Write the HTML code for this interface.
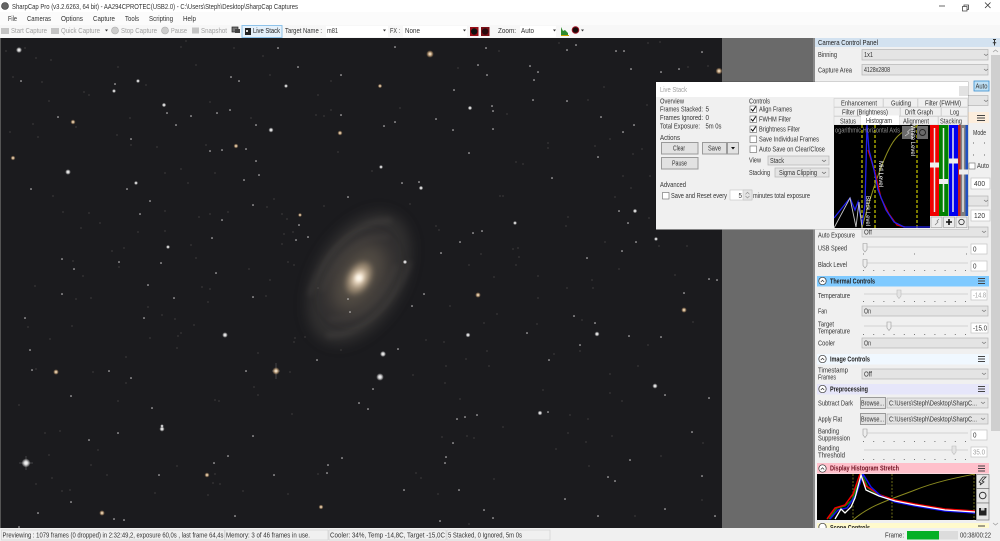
<!DOCTYPE html>
<html><head><meta charset="utf-8"><title>SharpCap</title>
<style>
html,body{margin:0;padding:0;background:#f0f0f0;width:1000px;height:541px;overflow:hidden}
svg{display:block}
text{font-family:"Liberation Sans",sans-serif;font-size:7.3px;fill:#333}
.g{fill:#a0a0a0}.b{font-weight:bold;fill:#222}.t{filter:blur(.2px)}
.c{fill:#e4e4e4;stroke:#b4b4b4;stroke-width:.7}
.w{fill:#fff;stroke:#c4c4c4;stroke-width:.7}
.btn{fill:#e2e2e2;stroke:#9a9a9a;stroke-width:1}
.cb{fill:#fff;stroke:#666;stroke-width:.6}
.tab{fill:#f0f0f0;stroke:#c8c8c8;stroke-width:.5}
.tick{stroke:#777;stroke-width:1;stroke-dasharray:1 9.2;fill:none}
.track{stroke:#dcdcdc;stroke-width:1.5}
.ham{stroke:#444;stroke-width:.9}
</style></head><body>
<svg xmlns="http://www.w3.org/2000/svg" width="1000" height="541" viewBox="0 0 1000 541">
<defs>
<filter id="b1" x="-50%" y="-50%" width="200%" height="200%"><feGaussianBlur stdDeviation="1.5"/></filter>
<filter id="b2" x="-50%" y="-50%" width="200%" height="200%"><feGaussianBlur stdDeviation="3"/></filter>
<filter id="b3" x="-50%" y="-50%" width="200%" height="200%"><feGaussianBlur stdDeviation="6"/></filter>
<filter id="b4" x="-50%" y="-50%" width="200%" height="200%"><feGaussianBlur stdDeviation="9"/></filter>
<radialGradient id="glow"><stop offset="0" stop-color="#fff"/><stop offset=".4" stop-color="#fff" stop-opacity=".8"/><stop offset="1" stop-color="#fff" stop-opacity="0"/></radialGradient>
<radialGradient id="glowo"><stop offset="0" stop-color="#fff6e6"/><stop offset=".4" stop-color="#ffd9a8" stop-opacity=".75"/><stop offset="1" stop-color="#e8b070" stop-opacity="0"/></radialGradient>
<clipPath id="img"><rect x="0" y="38" width="722" height="490"/></clipPath>
<clipPath id="hc"><rect x="834" y="125" width="96" height="103"/></clipPath>
<clipPath id="dc"><rect x="817" y="474" width="159" height="46"/></clipPath>
</defs>

<!-- chrome -->
<rect width="1000" height="541" fill="#f0f0f0"/>
<rect width="1000" height="12" fill="#fff"/>
<rect y="12" width="1000" height="13" fill="#fbfbfb"/>
<rect y="25" width="1000" height="13" fill="#f7f7f7"/>

<!-- image -->
<rect x="722" y="38" width="91" height="490" fill="#6a6a6a"/>
<rect x="813" y="38" width="2" height="490" fill="#8a8a8a"/>
<rect x="0" y="38" width="722" height="490" fill="#1b1b1e"/>
<rect x="0" y="38" width="1" height="490" fill="#555"/>
<g clip-path="url(#img)">
<g transform="translate(359 278) rotate(30)">
<ellipse rx="44" ry="72" fill="#454240" opacity=".5" filter="url(#b3)"/>
<path d="M-34 40C-44 0 -34 -50 0 -66M36 -40C44 0 34 50 0 66" fill="none" stroke="#6a6561" stroke-width="5" opacity=".22" filter="url(#b2)"/>
<path d="M-26 30C-32 -5 -22 -40 6 -50M26 -30C32 5 22 40 -6 50" fill="none" stroke="#6f6963" stroke-width="4" opacity=".18" filter="url(#b2)"/>
<ellipse rx="23" ry="38" fill="#5f564b" opacity=".75" filter="url(#b4)"/>
<ellipse rx="11" ry="17" fill="#97866f" filter="url(#b2)"/>
<ellipse rx="6" ry="9" fill="#eedcc4" filter="url(#b2)"/>
<circle r="3.500" fill="#fffaf0" filter="url(#b1)"/>
</g>
<!-- faint stars -->
<path fill="none" stroke="#6f6a68" stroke-width="1.1" stroke-linecap="round" d="M6 51h.01M25 48h.01M36 58h.01M51 60h.01M42 82h.01M89 95h.01M84 92h.01M49 101h.01M130 118h.01M146 85h.01M118 67h.01M196 65h.01M186 41h.01M181 47h.01M234 48h.01M263 56h.01M270 75h.01M331 81h.01M318 95h.01M331 110h.01M324 116h.01M316 115h.01M338 152h.01M63 212h.01M81 228h.01M100 223h.01M89 213h.01M138 232h.01M165 211h.01M165 231h.01M210 214h.01M228 212h.01M199 217h.01M191 245h.01M196 258h.01M282 244h.01M284 234h.01M293 232h.01M282 214h.01M287 219h.01M267 207h.01M274 199h.01M324 206h.01M288 262h.01M294 265h.01M249 269h.01M270 280h.01M112 251h.01M124 248h.01M73 261h.01M119 267h.01M83 276h.01M165 173h.01M181 169h.01M188 183h.01M215 173h.01M53 196h.01M10 132h.01M38 137h.01M117 135h.01M157 147h.01M131 145h.01M206 145h.01M210 102h.01M251 118h.01M13 77h.01M33 124h.01M76 127h.01M548 148h.01M548 143h.01M595 146h.01M610 139h.01M633 154h.01M642 149h.01M647 105h.01M604 87h.01M588 100h.01M507 114h.01M516 162h.01M523 164h.01M500 196h.01M503 196h.01M568 217h.01M566 226h.01M518 248h.01M519 257h.01M513 249h.01M516 265h.01M481 254h.01M494 277h.01M469 265h.01M439 230h.01M436 226h.01M605 242h.01M619 269h.01M675 275h.01M687 246h.01M659 246h.01M649 218h.01M615 197h.01M623 176h.01M631 188h.01M650 176h.01M372 171h.01M410 204h.01M400 108h.01M458 68h.01M499 51h.01M559 43h.01M648 43h.01M660 42h.01M688 67h.01M708 66h.01M538 276h.01M592 280h.01M35 286h.01M76 299h.01M91 298h.01M148 307h.01M162 315h.01M175 319h.01M194 325h.01M178 336h.01M181 333h.01M177 348h.01M150 338h.01M126 357h.01M50 339h.01M28 327h.01M72 326h.01M93 372h.01M118 401h.01M126 383h.01M36 369h.01M19 405h.01M45 433h.01M60 431h.01M49 455h.01M91 465h.01M107 475h.01M52 478h.01M36 484h.01M62 491h.01M70 490h.01M98 450h.01M177 466h.01M213 483h.01M220 484h.01M215 474h.01M243 491h.01M208 495h.01M155 493h.01M215 400h.01M219 401h.01M254 387h.01M258 395h.01M292 414h.01M258 353h.01M290 372h.01M295 338h.01M305 337h.01M294 342h.01M341 350h.01M318 474h.01M288 494h.01M208 302h.01M202 287h.01M210 289h.01M266 296h.01M318 288h.01M450 306h.01M497 314h.01M484 323h.01M537 324h.01M426 340h.01M444 342h.01M487 351h.01M466 359h.01M489 366h.01M446 366h.01M413 375h.01M445 383h.01M460 399h.01M543 390h.01M570 415h.01M588 419h.01M622 401h.01M610 393h.01M610 374h.01M638 366h.01M648 345h.01M554 354h.01M580 351h.01M582 320h.01M593 288h.01M567 288h.01M538 298h.01M693 322h.01M661 456h.01M612 436h.01M586 442h.01M568 433h.01M556 449h.01M589 466h.01M467 436h.01M474 438h.01M442 437h.01M503 427h.01M416 473h.01M421 478h.01M438 494h.01M494 479h.01M469 524h.01M702 500h.01M635 516h.01M703 443h.01"/>
<!-- medium stars -->
<path fill="none" stroke="#dcdada" stroke-width="1.500" stroke-linecap="round" d="M278 48h.01M298 67h.01M341 75h.01M21 81h.01M131 139h.01M222 150h.01M210 151h.01M259 175h.01M348 197h.01M253 205h.01M222 220h.01M296 240h.01M299 225h.01M62 259h.01M74 269h.01M119 262h.01M161 263h.01M216 273h.01M58 117h.01M31 189h.01M176 125h.01M341 115h.01M256 125h.01M230 110h.01M217 113h.01M167 113h.01M191 116h.01M231 77h.01M239 81h.01M115 84h.01M212 238h.01M308 237h.01M127 189h.01M150 201h.01M140 214h.01M244 180h.01M256 161h.01M246 149h.01M395 47h.01M486 48h.01M530 66h.01M538 72h.01M567 50h.01M576 45h.01M616 51h.01M624 51h.01M631 69h.01M661 72h.01M679 69h.01M702 52h.01M534 80h.01M436 119h.01M453 130h.01M493 129h.01M395 122h.01M384 126h.01M601 117h.01M567 101h.01M634 125h.01M623 132h.01M598 157h.01M469 153h.01M552 178h.01M619 211h.01M628 223h.01M636 242h.01M441 253h.01M460 242h.01M482 231h.01M473 233h.01M622 251h.01M587 258h.01M709 279h.01M717 280h.01M419 182h.01M402 183h.01M478 65h.01M487 75h.01M454 90h.01M492 106h.01M493 111h.01M533 100h.01M174 298h.01M144 318h.01M62 294h.01M25 318h.01M131 378h.01M71 396h.01M32 370h.01M109 371h.01M89 440h.01M118 433h.01M159 475h.01M214 463h.01M228 456h.01M253 436h.01M328 465h.01M342 458h.01M327 473h.01M348 299h.01M350 312h.01M317 360h.01M253 297h.01M359 403h.01M114 519h.01M124 520h.01M71 502h.01M38 513h.01M19 527h.01M235 516h.01M274 475h.01M246 371h.01M30 350h.01M148 285h.01M152 408h.01M424 294h.01M412 306h.01M398 349h.01M684 293h.01M595 323h.01M629 336h.01M661 337h.01M580 345h.01M549 360h.01M548 412h.01M709 398h.01M665 395h.01M457 419h.01M465 417h.01M477 415h.01M453 443h.01M692 432h.01M608 477h.01M615 481h.01M702 476h.01M565 499h.01M665 509h.01M715 516h.01M598 516h.01M484 510h.01M440 521h.01M493 518h.01M459 490h.01M404 490h.01M527 333h.01M574 316h.01M368 409h.01M373 389h.01M445 463h.01M446 457h.01M630 460h.01"/>
<!-- bright stars -->
<g fill="url(#glow)">
<circle cx="19" cy="50" r="3"/><circle cx="68" cy="172" r="2.800"/><circle cx="271" cy="130" r="2.500"/><circle cx="164" cy="105" r="2.200"/><circle cx="114" cy="91" r="2"/><circle cx="138" cy="81" r="2"/><circle cx="168" cy="247" r="2"/><circle cx="136" cy="183" r="2"/><circle cx="286" cy="86" r="2"/><circle cx="470" cy="108" r="2.200"/><circle cx="421" cy="188" r="2.200"/><circle cx="635" cy="211" r="2.200"/><circle cx="515" cy="223" r="2"/><circle cx="405" cy="262" r="2.200"/><circle cx="381" cy="167" r="2"/><circle cx="656" cy="239" r="2"/>
<circle cx="26" cy="463" r="4.500"/><circle cx="162" cy="429" r="2.600"/><circle cx="162" cy="426" r="1.800"/><circle cx="225" cy="335" r="2.800"/><circle cx="380" cy="377" r="3.800"/><circle cx="383" cy="354" r="3"/><circle cx="597" cy="334" r="2.500"/><circle cx="655" cy="386" r="2.600"/><circle cx="540" cy="413" r="2.400"/><circle cx="468" cy="335" r="2.400"/>
</g>
<g fill="url(#glowo)">
<circle cx="73" cy="122" r="2.500"/><circle cx="13" cy="158" r="2.400"/><circle cx="340" cy="133" r="2.500"/><circle cx="236" cy="146" r="2.400"/><circle cx="300" cy="215" r="2"/><circle cx="430" cy="54" r="3.800"/><circle cx="719" cy="71" r="3.400"/><circle cx="380" cy="86" r="2.200"/>
<circle cx="276" cy="371" r="3.800"/><circle cx="56" cy="372" r="2.800"/><circle cx="102" cy="513" r="2.800"/><circle cx="207" cy="475" r="2.500"/><circle cx="321" cy="507" r="2.400"/><circle cx="478" cy="295" r="2.800"/><circle cx="684" cy="310" r="2.800"/>
</g>
<path d="M19 463h14M26 456v14M272 371h8M276 363v16" stroke="#fff" stroke-width=".5" opacity=".35"/>
</g>

<!-- title & toolbar -->
<circle cx="5" cy="6" r="3.500" fill="#666" stroke="#333" stroke-width=".6"/>
<g class="t">
<text x="12" y="8.800" textLength="286" lengthAdjust="spacingAndGlyphs">SharpCap Pro (v3.2.6263, 64 bit) - AA294CPROTEC(USB2.0) - C:\Users\Steph\Desktop\SharpCap Captures</text>
<text x="8" y="21" textLength="9" lengthAdjust="spacingAndGlyphs">File</text>
<text x="27" y="21" textLength="24" lengthAdjust="spacingAndGlyphs">Cameras</text>
<text x="61" y="21" textLength="22" lengthAdjust="spacingAndGlyphs">Options</text>
<text x="93" y="21" textLength="22" lengthAdjust="spacingAndGlyphs">Capture</text>
<text x="125" y="21" textLength="14" lengthAdjust="spacingAndGlyphs">Tools</text>
<text x="149" y="21" textLength="24" lengthAdjust="spacingAndGlyphs">Scripting</text>
<text x="183" y="21" textLength="13" lengthAdjust="spacingAndGlyphs">Help</text>
</g>
<path d="M939 6h6" stroke="#444" stroke-width=".8"/>
<path d="M962.500 6.500h4.500v4.500h-4.500zM964 6.500v-1.500h4.500v4.500h-1.500" fill="none" stroke="#444" stroke-width=".8"/>
<path d="M985 2.500l5.500 5.500M990.500 2.500l-5.500 5.500" stroke="#333" stroke-width=".8"/>

<rect x="1" y="28" width="8" height="6" fill="#c4c4c4"/>
<rect x="51" y="28" width="8" height="6" fill="#c4c4c4"/>
<circle cx="115" cy="30.500" r="3.500" fill="#ccc" stroke="#aaa" stroke-width=".6"/>
<circle cx="165" cy="30.500" r="3.500" fill="#ccc" stroke="#aaa" stroke-width=".6"/>
<rect x="192" y="27.500" width="7" height="6" fill="#c4c4c4"/>
<rect x="232" y="27" width="6" height="5" fill="#777" stroke="#222" stroke-width=".7"/><rect x="235" y="29" width="5" height="4" fill="#444"/>
<rect x="242" y="25.500" width="40" height="12" fill="#e5f1fb" stroke="#8fc3ea" stroke-width="1"/>
<rect x="245" y="28" width="6" height="7" fill="#222"/><rect x="246" y="30" width="2" height="2" fill="#ddd"/>
<rect x="326" y="26" width="62" height="11" fill="#fff"/><rect x="403" y="26" width="64" height="11" fill="#fff"/><rect x="520" y="26" width="36" height="11" fill="#fff"/>
<path d="M105 29.500h3l-1.500 2zM383 29.500h3l-1.500 2zM463 29.500h3l-1.500 2zM553 29.500h3l-1.500 2zM581 29.500h3l-1.500 2z" fill="#333"/>
<rect x="470" y="27" width="8.500" height="9" fill="#9a0f18"/><circle cx="474.200" cy="31.500" r="3.200" fill="#111"/>
<rect x="481" y="27" width="8.500" height="9" fill="#7a1018"/><circle cx="485.200" cy="31.500" r="3.200" fill="#2a0a0e"/>
<path d="M561 35v-8l2 4 2-1 3 3v2z" fill="#2e8b2e"/><path d="M561 35.500h8" stroke="#c9a000" stroke-width="1"/>
<circle cx="575.500" cy="30" r="3.300" fill="#1a0a0a" stroke="#a01525" stroke-width="1"/>
<g class="t">
<text class="g" x="11" y="33" textLength="36" lengthAdjust="spacingAndGlyphs">Start Capture</text>
<text class="g" x="61" y="33" textLength="39" lengthAdjust="spacingAndGlyphs">Quick Capture</text>
<text class="g" x="121" y="33" textLength="36" lengthAdjust="spacingAndGlyphs">Stop Capture</text>
<text class="g" x="171" y="33" textLength="16" lengthAdjust="spacingAndGlyphs">Pause</text>
<text class="g" x="201" y="33" textLength="26" lengthAdjust="spacingAndGlyphs">Snapshot</text>
<text x="253" y="33" textLength="27" lengthAdjust="spacingAndGlyphs" style="fill:#222">Live Stack</text>
<text x="285" y="33" textLength="37" lengthAdjust="spacingAndGlyphs">Target Name :</text>
<text x="327" y="33" textLength="11" lengthAdjust="spacingAndGlyphs">m81</text>
<text x="390" y="33" textLength="10" lengthAdjust="spacingAndGlyphs">FX :</text>
<text x="405" y="33" textLength="15" lengthAdjust="spacingAndGlyphs">None</text>
<text x="498" y="33" textLength="18" lengthAdjust="spacingAndGlyphs">Zoom:</text>
<text x="521" y="33" textLength="13" lengthAdjust="spacingAndGlyphs">Auto</text>
</g>

<!-- right panel -->
<rect x="815" y="38" width="185" height="490" fill="#f0f0f0"/>
<rect x="815" y="38" width="185" height="9" fill="#d3e2f0"/>
<rect x="991" y="47" width="9" height="384" fill="#cfcfcf"/>
<rect x="991" y="47" width="9" height="8" fill="#f0f0f0"/>
<path d="M993 52l2.500-2 2.500 2M993 523l2.500 2 2.500-2" fill="none" stroke="#a0a0a0" stroke-width=".8"/>
<path d="M993 39.500h3M994.500 39.500v6M992.800 42.800h3.400" stroke="#333" stroke-width="1"/>
<rect class="c" x="862" y="49.500" width="126" height="10.500"/>
<rect class="c" x="862" y="64.500" width="126" height="10.500"/>
<rect x="974" y="81" width="15" height="10" fill="#bfe0f5" stroke="#3a8fd0" stroke-width=".8"/>
<rect class="c" x="862" y="95.500" width="126" height="10"/>
<rect x="817" y="112" width="172" height="11" fill="#fdeedd"/>
<path class="ham" d="M977 115.500h8M977 118h8M977 120.500h8"/>
<rect x="969" y="163" width="6" height="6" class="cb"/>
<path d="M973 143h1M984 143h1" stroke="#666" stroke-width="1"/>
<path d="M973 155h1M984 155h1" stroke="#666" stroke-width="1"/>
<rect class="w" x="971" y="178" width="19" height="11"/>
<rect class="c" x="862" y="196" width="126" height="10"/>
<rect class="w" x="971" y="210" width="19" height="11"/>
<path d="M984 100l2 1.500 2-1.500M984 54l2 1.500 2-1.500M984 69l2 1.500 2-1.500M984 200l2 1.500 2-1.500" fill="none" stroke="#777" stroke-width=".7"/>

<rect class="c" x="862" y="227" width="126" height="10"/>
<path class="track" d="M864 247h104M864 263h104M864 294h104M864 326h104M864 433h104M864 450h104"/>
<path d="M863 243.500h4v6l-2 2.500-2-2.500z" fill="#eee" stroke="#999" stroke-width=".6"/>
<path d="M863 259.500h4v6l-2 2.500-2-2.500z" fill="#eee" stroke="#999" stroke-width=".6"/>
<path d="M897 290h4v6l-2 2.500-2-2.500z" fill="#e4e4e4" stroke="#bbb" stroke-width=".6"/>
<path d="M887 322h4v6l-2 2.500-2-2.500z" fill="#eee" stroke="#999" stroke-width=".6"/>
<path d="M863 429h4v6l-2 2.500-2-2.500z" fill="#eee" stroke="#999" stroke-width=".6"/>
<path d="M952 446h4v6l-2 2.500-2-2.500z" fill="#e4e4e4" stroke="#bbb" stroke-width=".6"/>
<path d="M863 254h1M914 254h1M966 254h1" stroke="#777" stroke-width="1"/>
<path class="tick" d="M863 270.500h105" stroke-dasharray="1 3"/>
<path class="tick" d="M863 301.500h105M863 334.500h105M863 441.500h105M863 459.500h105"/>
<rect class="w" x="971" y="244" width="16" height="10"/>
<rect class="w" x="971" y="261" width="16" height="10"/>
<rect class="w" x="971" y="290" width="16" height="10"/>
<rect class="w" x="971" y="323" width="17" height="10"/>
<rect class="c" x="862" y="306" width="126" height="10"/>
<rect class="c" x="862" y="338" width="126" height="10"/>
<rect class="c" x="862" y="369" width="126" height="10"/>
<rect class="btn" x="860.500" y="397.500" width="25" height="11"/>
<rect class="btn" x="860.500" y="413.500" width="25" height="11"/>
<rect class="c" x="887" y="398" width="101" height="10"/>
<rect class="c" x="887" y="414" width="101" height="10"/>
<rect class="w" x="971" y="430" width="16" height="10"/>
<rect class="w" x="971" y="447" width="16" height="10"/>
<path d="M982 231l2 1.500 2-1.500M982 310l2 1.500 2-1.500M982 342l2 1.500 2-1.500M982 373l2 1.500 2-1.500M981 402l2 1.500 2-1.500M981 418l2 1.500 2-1.500" fill="none" stroke="#777" stroke-width=".7"/>

<!-- section headers -->
<rect x="817" y="276" width="172" height="10.500" fill="#7fcaff"/>
<rect x="817" y="354" width="172" height="10.500" fill="#f0f8ff"/>
<rect x="817" y="384" width="172" height="10.500" fill="#e6e6fa"/>
<rect x="817" y="463" width="172" height="10.500" fill="#ffc0cb"/>
<rect x="817" y="523" width="172" height="6" fill="#fffacd"/>
<g fill="#fff" stroke="#333" stroke-width=".7"><circle cx="822.500" cy="281" r="3.700"/><circle cx="822.500" cy="359" r="3.700"/><circle cx="822.500" cy="389" r="3.700"/><circle cx="822.500" cy="468.500" r="3.700"/><circle cx="822.500" cy="527" r="3.700"/></g>
<path d="M820.800 282l1.700-1.700 1.700 1.700M820.800 360l1.700-1.700 1.700 1.700M820.800 390l1.700-1.700 1.700 1.700M820.800 469.500l1.700-1.700 1.700 1.700" fill="none" stroke="#333" stroke-width=".7"/>
<path class="ham" d="M978 278.500h7M978 281h7M978 283.500h7M978 356.500h7M978 359h7M978 361.500h7M978 386.500h7M978 389h7M978 391.500h7M978 466h7M978 468.500h7M978 471h7M978 526h7"/>

<!-- display histogram -->
<rect x="817" y="474" width="159" height="46" fill="#000"/>
<g clip-path="url(#dc)" fill="none">
<path d="M853 474v46M892 474v46M974 474v46" stroke="#8a8a20" stroke-width=".8" stroke-dasharray="2 1.500"/>
<path d="M853 520C870 505 892 499 915 490S960 477 975 474" stroke="#8a8a20" stroke-width="1"/>
<path d="M829 519L837 508 845 506 852 500 862 474 868 488 880 496 895 501 915 505 945 510 975 512" stroke="#0a8a0a" stroke-width="1.400"/>
<path d="M827 519L835 508 845 505 853 494 860 474 866 486 880 495 895 500 915 504 945 509 975 511" stroke="#f00000" stroke-width="1.500"/>
<path d="M830 519L838 510 847 508 856 495 863 474 871 487 881 496 895 502 915 506 945 511 975 513" stroke="#1010f0" stroke-width="1.500"/>
<path d="M835 519L841 509 845 513 851 507 855 498 861 475 866 490 879 496 895 501 915 505 945 510 975 512" stroke="#fff" stroke-width="1.300"/>
</g>
<g fill="#e6e6e6" stroke="#777" stroke-width=".7"><rect x="976.500" y="474.500" width="12.500" height="14"/><rect x="976.500" y="488.500" width="12.500" height="14.500"/><rect x="976.500" y="503" width="12.500" height="17"/></g>
<path d="M980 485l4-3-2-1 4-4-3 0-4 5 2 1z" fill="none" stroke="#333" stroke-width=".8"/>
<circle cx="982.700" cy="495.500" r="3.300" fill="none" stroke="#333" stroke-width="1"/>
<rect x="979" y="508" width="7.500" height="7.500" fill="#222"/><rect x="981" y="508" width="3.500" height="2.500" fill="#ccc"/>

<g class="t">
<text x="818" y="45" textLength="60" lengthAdjust="spacingAndGlyphs" style="fill:#222">Camera Control Panel</text>
<text x="818" y="57" textLength="19" lengthAdjust="spacingAndGlyphs">Binning</text>
<text x="864" y="56.800" textLength="9" lengthAdjust="spacingAndGlyphs">1x1</text>
<text x="818" y="72.500" textLength="34" lengthAdjust="spacingAndGlyphs">Capture Area</text>
<text x="864" y="72" textLength="26" lengthAdjust="spacingAndGlyphs">4128x2808</text>
<text x="975.500" y="88.500" textLength="12" lengthAdjust="spacingAndGlyphs">Auto</text>
<text x="973" y="135" textLength="13" lengthAdjust="spacingAndGlyphs">Mode</text>
<text x="977" y="168" textLength="12" lengthAdjust="spacingAndGlyphs">Auto</text>
<text x="974" y="186" textLength="11" lengthAdjust="spacingAndGlyphs">400</text>
<text x="974" y="218" textLength="11" lengthAdjust="spacingAndGlyphs">120</text>
<text x="818" y="237.500" textLength="37" lengthAdjust="spacingAndGlyphs">Auto Exposure</text>
<text x="864" y="234.500" textLength="8" lengthAdjust="spacingAndGlyphs">Off</text>
<text x="818" y="250.500" textLength="29" lengthAdjust="spacingAndGlyphs">USB Speed</text>
<text x="973" y="251.500" textLength="3.500" lengthAdjust="spacingAndGlyphs">0</text>
<text x="818" y="267" textLength="29" lengthAdjust="spacingAndGlyphs">Black Level</text>
<text x="973" y="268.500" textLength="3.500" lengthAdjust="spacingAndGlyphs">0</text>
<text class="b" x="830" y="283.500" textLength="45" lengthAdjust="spacingAndGlyphs">Thermal Controls</text>
<text x="818" y="298" textLength="32" lengthAdjust="spacingAndGlyphs">Temperature</text>
<text x="973" y="297.500" class="g" textLength="13" lengthAdjust="spacingAndGlyphs">-14.8</text>
<text x="818" y="313.500" textLength="9" lengthAdjust="spacingAndGlyphs">Fan</text>
<text x="864" y="313.500" textLength="7" lengthAdjust="spacingAndGlyphs">On</text>
<text x="818" y="326.500" textLength="16" lengthAdjust="spacingAndGlyphs">Target</text>
<text x="818" y="333.500" textLength="32" lengthAdjust="spacingAndGlyphs">Temperature</text>
<text x="973" y="330.500" textLength="14" lengthAdjust="spacingAndGlyphs">-15.0</text>
<text x="818" y="345.500" textLength="17" lengthAdjust="spacingAndGlyphs">Cooler</text>
<text x="864" y="345.500" textLength="7" lengthAdjust="spacingAndGlyphs">On</text>
<text class="b" x="830" y="361.500" textLength="40" lengthAdjust="spacingAndGlyphs">Image Controls</text>
<text x="818" y="372.500" textLength="30" lengthAdjust="spacingAndGlyphs">Timestamp</text>
<text x="818" y="379.500" textLength="18" lengthAdjust="spacingAndGlyphs">Frames</text>
<text x="864" y="376.500" textLength="8" lengthAdjust="spacingAndGlyphs">Off</text>
<text class="b" x="830" y="391.500" textLength="38" lengthAdjust="spacingAndGlyphs">Preprocessing</text>
<text x="818" y="405.500" textLength="35" lengthAdjust="spacingAndGlyphs">Subtract Dark</text>
<text x="861" y="405.500" textLength="23" lengthAdjust="spacingAndGlyphs">Browse...</text>
<text x="889" y="405.500" textLength="88" lengthAdjust="spacingAndGlyphs">C:\Users\Steph\Desktop\SharpC...</text>
<text x="818" y="421.500" textLength="24" lengthAdjust="spacingAndGlyphs">Apply Flat</text>
<text x="861" y="421.500" textLength="23" lengthAdjust="spacingAndGlyphs">Browse...</text>
<text x="889" y="421.500" textLength="88" lengthAdjust="spacingAndGlyphs">C:\Users\Steph\Desktop\SharpC...</text>
<text x="818" y="433.500" textLength="21" lengthAdjust="spacingAndGlyphs">Banding</text>
<text x="818" y="440.500" textLength="32" lengthAdjust="spacingAndGlyphs">Suppression</text>
<text x="973" y="437.500" textLength="3.500" lengthAdjust="spacingAndGlyphs">0</text>
<text x="818" y="450.500" textLength="21" lengthAdjust="spacingAndGlyphs">Banding</text>
<text x="818" y="457.500" textLength="27" lengthAdjust="spacingAndGlyphs">Threshold</text>
<text x="973" y="454.500" class="g" textLength="12" lengthAdjust="spacingAndGlyphs">35.0</text>
<text class="b" x="830" y="470.500" textLength="69" lengthAdjust="spacingAndGlyphs" style="fill:#701020">Display Histogram Stretch</text>
<text class="b" x="830" y="530" textLength="40" lengthAdjust="spacingAndGlyphs">Scope Controls</text>
</g>

<!-- status bar -->
<rect x="0" y="528" width="1000" height="13" fill="#f0f0f0"/>
<rect x="1.500" y="530" width="223" height="10" fill="none" stroke="#ccc" stroke-width=".6"/>
<rect x="225" y="530" width="103" height="10" fill="none" stroke="#ccc" stroke-width=".6"/>
<rect x="329" y="530" width="117" height="10" fill="none" stroke="#ccc" stroke-width=".6"/>
<rect x="447" y="530" width="103" height="10" fill="none" stroke="#ccc" stroke-width=".6"/>
<rect x="907" y="531" width="32" height="8.500" fill="#06b025"/>
<rect x="939" y="531" width="19" height="8.500" fill="#dcdcdc"/>
<g class="t">
<text x="2.500" y="537.500" textLength="221" lengthAdjust="spacingAndGlyphs">Previewing : 1079 frames (0 dropped) in 2:32:49,2, exposure 60,0s , last frame 64,4s</text>
<text x="226" y="537.500" textLength="84" lengthAdjust="spacingAndGlyphs">Memory: 3 of 46 frames in use.</text>
<text x="330" y="537.500" textLength="115" lengthAdjust="spacingAndGlyphs">Cooler: 34%, Temp -14,8C, Target -15,0C</text>
<text x="448" y="537.500" textLength="74" lengthAdjust="spacingAndGlyphs">5 Stacked, 0 Ignored, 5m 0s</text>
<text x="885" y="537.500" textLength="19" lengthAdjust="spacingAndGlyphs">Frame:</text>
<text x="960" y="537.500" textLength="31" lengthAdjust="spacingAndGlyphs">00:38/00:22</text>
</g>

<!-- Live stack window -->
<rect x="655.500" y="81.500" width="313" height="148.500" fill="#000" opacity=".25"/>
<rect x="656" y="82" width="312" height="147.500" fill="#f0f0f0"/>
<rect x="656" y="82" width="312" height="15" fill="#fff"/>
<rect x="959" y="86" width="9" height="10" fill="#e2e2e2"/>
<rect class="btn" x="661.500" y="142.500" width="36.500" height="11.500"/>
<rect class="btn" x="702.500" y="142.500" width="24" height="11.500"/>
<rect class="btn" x="727.500" y="142.500" width="11" height="11.500"/>
<path d="M731 147h4l-2 2.500z" fill="#111"/>
<rect class="btn" x="661.500" y="157.500" width="36.500" height="11.500"/>
<rect class="cb" x="662.500" y="192.500" width="6.500" height="6.500"/>
<rect x="730" y="190" width="22" height="10" fill="#fff" stroke="#c4c4c4" stroke-width=".6"/>
<rect x="743" y="190" width="9" height="10" fill="#e4e4e4" stroke="#bbb" stroke-width=".5"/>
<path d="M745.500 194.300l2-2 2 2M745.500 196l2 2 2-2" fill="none" stroke="#888" stroke-width=".6"/>
<g class="cb"><rect x="750" y="106" width="6.500" height="6.500"/><rect x="750" y="116" width="6.500" height="6.500"/><rect x="750" y="126" width="6.500" height="6.500"/><rect x="750" y="136" width="6.500" height="6.500"/><rect x="750" y="146" width="6.500" height="6.500"/></g>
<path d="M751 109l1.800 2 3-4.500M751 119l1.800 2 3-4.500M751 129l1.800 2 3-4.500" fill="none" stroke="#111" stroke-width="1"/>
<rect class="c" x="768" y="156" width="61" height="9"/>
<rect class="c" x="775" y="168" width="54" height="9"/>
<path d="M822 160l2 1.500 2-1.500M822 172l2 1.500 2-1.500" fill="none" stroke="#666" stroke-width=".7"/>

<!-- tabs -->
<g class="tab">
<rect x="834" y="98.500" width="49" height="8.500"/><rect x="883.500" y="98.500" width="34" height="8.500"/><rect x="918" y="98.500" width="49.500" height="8.500"/>
<rect x="834" y="107.500" width="66" height="8.500"/><rect x="900.500" y="107.500" width="40.500" height="8.500"/><rect x="941.500" y="107.500" width="26" height="8.500"/>
<rect x="834" y="116.500" width="27" height="8.500"/><rect x="899" y="116.500" width="39" height="8.500"/><rect x="938.500" y="116.500" width="29" height="8.500"/>
</g>
<rect x="861" y="115.500" width="38" height="10" fill="#fff"/>

<!-- histogram -->
<rect x="834" y="125" width="96" height="103" fill="#000"/>
<g clip-path="url(#hc)" fill="none">
<path d="M862 125v103M875 125v103M917 125v103" stroke="#f4f400" stroke-width="1" stroke-dasharray="3 2"/>
<path d="M862 228C868 205 875 182 884 160S900 130 918 126" stroke="#8f8f20" stroke-width="1"/>
<path d="M868 150L875 172 881 198 889 214 897 225 905 227" stroke="#e00000" stroke-width="1.300"/>
<path d="M834 218L850 198 855 210 858 202 862 225 865 205 867 125 869 150 874 170 878 190 886 210 894 222 904 227 930 227" stroke="#2020f0" stroke-width="1.300"/>
<path d="M834 228L850 198 856 227 859 202 862 228" stroke="#c8c8c8" stroke-width=".9"/>
</g>
<rect x="902" y="126" width="11" height="13" fill="#6a6a6a"/>
<rect x="917" y="126" width="11" height="13" fill="#6a6a6a"/>
<circle cx="922.500" cy="132.500" r="3" fill="none" stroke="#222" stroke-width=".9"/>
<path d="M905 136l4-3-1.500-1 3-3" fill="none" stroke="#ccc" stroke-width=".7"/>
<rect x="930" y="125" width="9" height="91" fill="#f00000"/>
<rect x="939" y="125" width="9.500" height="91" fill="#008000"/>
<rect x="949" y="125" width="9" height="91" fill="#0000f0"/>
<rect x="958" y="125" width="2.500" height="91" fill="#c02020"/>
<rect x="960.500" y="125" width="5" height="91" fill="#808080"/>
<rect x="965.500" y="125" width="2.500" height="91" fill="#2050c0"/>
<path d="M934.500 128v84M943.500 128v84M953 128v84M963 128v84" stroke="#e8e8e8" stroke-width="1.500"/>
<g fill="#eee"><rect x="930" y="162.500" width="9" height="5"/><rect x="939" y="179" width="9" height="5"/><rect x="949" y="158.500" width="9" height="5"/><rect x="959" y="169.500" width="9" height="5"/></g>
<g fill="#ececec" stroke="#999" stroke-width=".6"><rect x="931" y="217" width="11" height="10.500"/><rect x="943.500" y="217" width="11" height="10.500"/><rect x="956" y="217" width="11" height="10.500"/></g>
<path d="M949 219v6M946 222h6" stroke="#111" stroke-width="1.600"/>
<circle cx="961.500" cy="222" r="2.700" fill="none" stroke="#333" stroke-width=".8"/>
<path d="M935 225l3-3-1-1 2-2" fill="none" stroke="#777" stroke-width=".7"/>

<g class="t">
<text x="660" y="92" textLength="27" lengthAdjust="spacingAndGlyphs" class="g">Live Stack</text>
<text x="660" y="103.500" textLength="24" lengthAdjust="spacingAndGlyphs">Overview</text>
<text x="660" y="111.500" textLength="43" lengthAdjust="spacingAndGlyphs">Frames Stacked:</text><text x="705.500" y="111.500" textLength="3.500" lengthAdjust="spacingAndGlyphs">5</text>
<text x="660" y="119.800" textLength="43" lengthAdjust="spacingAndGlyphs">Frames Ignored:</text><text x="705.500" y="119.800" textLength="3.500" lengthAdjust="spacingAndGlyphs">0</text>
<text x="660" y="128.300" textLength="40" lengthAdjust="spacingAndGlyphs">Total Exposure:</text><text x="705.500" y="128.300" textLength="16" lengthAdjust="spacingAndGlyphs">5m 0s</text>
<text x="660" y="139.800" textLength="20" lengthAdjust="spacingAndGlyphs">Actions</text>
<text x="673" y="150.500" textLength="12" lengthAdjust="spacingAndGlyphs">Clear</text>
<text x="708" y="150.500" textLength="13" lengthAdjust="spacingAndGlyphs">Save</text>
<text x="672" y="165.500" textLength="15" lengthAdjust="spacingAndGlyphs">Pause</text>
<text x="660" y="187" textLength="26" lengthAdjust="spacingAndGlyphs">Advanced</text>
<text x="671" y="198" textLength="56" lengthAdjust="spacingAndGlyphs">Save and Reset every</text>
<text x="738.500" y="197.800" textLength="3.500" lengthAdjust="spacingAndGlyphs">5</text>
<text x="753" y="198" textLength="57" lengthAdjust="spacingAndGlyphs">minutes total exposure</text>
<text x="749" y="103.500" textLength="21" lengthAdjust="spacingAndGlyphs">Controls</text>
<text x="759" y="111.500" textLength="33" lengthAdjust="spacingAndGlyphs">Align Frames</text>
<text x="759" y="121.500" textLength="32" lengthAdjust="spacingAndGlyphs">FWHM Filter</text>
<text x="759" y="131.500" textLength="41" lengthAdjust="spacingAndGlyphs">Brightness Filter</text>
<text x="759" y="141.500" textLength="60" lengthAdjust="spacingAndGlyphs">Save Individual Frames</text>
<text x="759" y="151.500" textLength="66" lengthAdjust="spacingAndGlyphs">Auto Save on Clear/Close</text>
<text x="749" y="162.500" textLength="12" lengthAdjust="spacingAndGlyphs">View</text>
<text x="770" y="162.800" textLength="14" lengthAdjust="spacingAndGlyphs">Stack</text>
<text x="749" y="174.800" textLength="21" lengthAdjust="spacingAndGlyphs">Stacking</text>
<text x="779" y="174.800" textLength="38" lengthAdjust="spacingAndGlyphs">Sigma Clipping</text>
<text x="841" y="105.300" textLength="36" lengthAdjust="spacingAndGlyphs">Enhancement</text>
<text x="891" y="105.300" textLength="20" lengthAdjust="spacingAndGlyphs">Guiding</text>
<text x="925" y="105.300" textLength="36" lengthAdjust="spacingAndGlyphs">Filter (FWHM)</text>
<text x="842" y="114.300" textLength="46" lengthAdjust="spacingAndGlyphs">Filter (Brightness)</text>
<text x="905" y="114.300" textLength="28" lengthAdjust="spacingAndGlyphs">Drift Graph</text>
<text x="950" y="114.300" textLength="9" lengthAdjust="spacingAndGlyphs">Log</text>
<text x="840" y="123.300" textLength="16" lengthAdjust="spacingAndGlyphs">Status</text>
<text x="866" y="123" textLength="26" lengthAdjust="spacingAndGlyphs">Histogram</text>
<text x="903" y="123.300" textLength="26" lengthAdjust="spacingAndGlyphs">Alignment</text>
<text x="940" y="123.300" textLength="22" lengthAdjust="spacingAndGlyphs">Stacking</text>
<text x="835" y="132.500" textLength="65" lengthAdjust="spacingAndGlyphs" style="fill:#8a8a8a">ogarithmic Horizontal Axis</text>
<text transform="translate(866 196) rotate(90)" textLength="30" lengthAdjust="spacingAndGlyphs" style="fill:#fff;font-size:6.500px">Black Level</text>
<text transform="translate(879 161) rotate(90)" textLength="26" lengthAdjust="spacingAndGlyphs" style="fill:#fff;font-size:6.500px">Mid Level</text>
<text transform="translate(911 125) rotate(90)" textLength="31" lengthAdjust="spacingAndGlyphs" style="fill:#fff;font-size:6.500px">White Level</text>
</g>
</svg>
</body></html>
